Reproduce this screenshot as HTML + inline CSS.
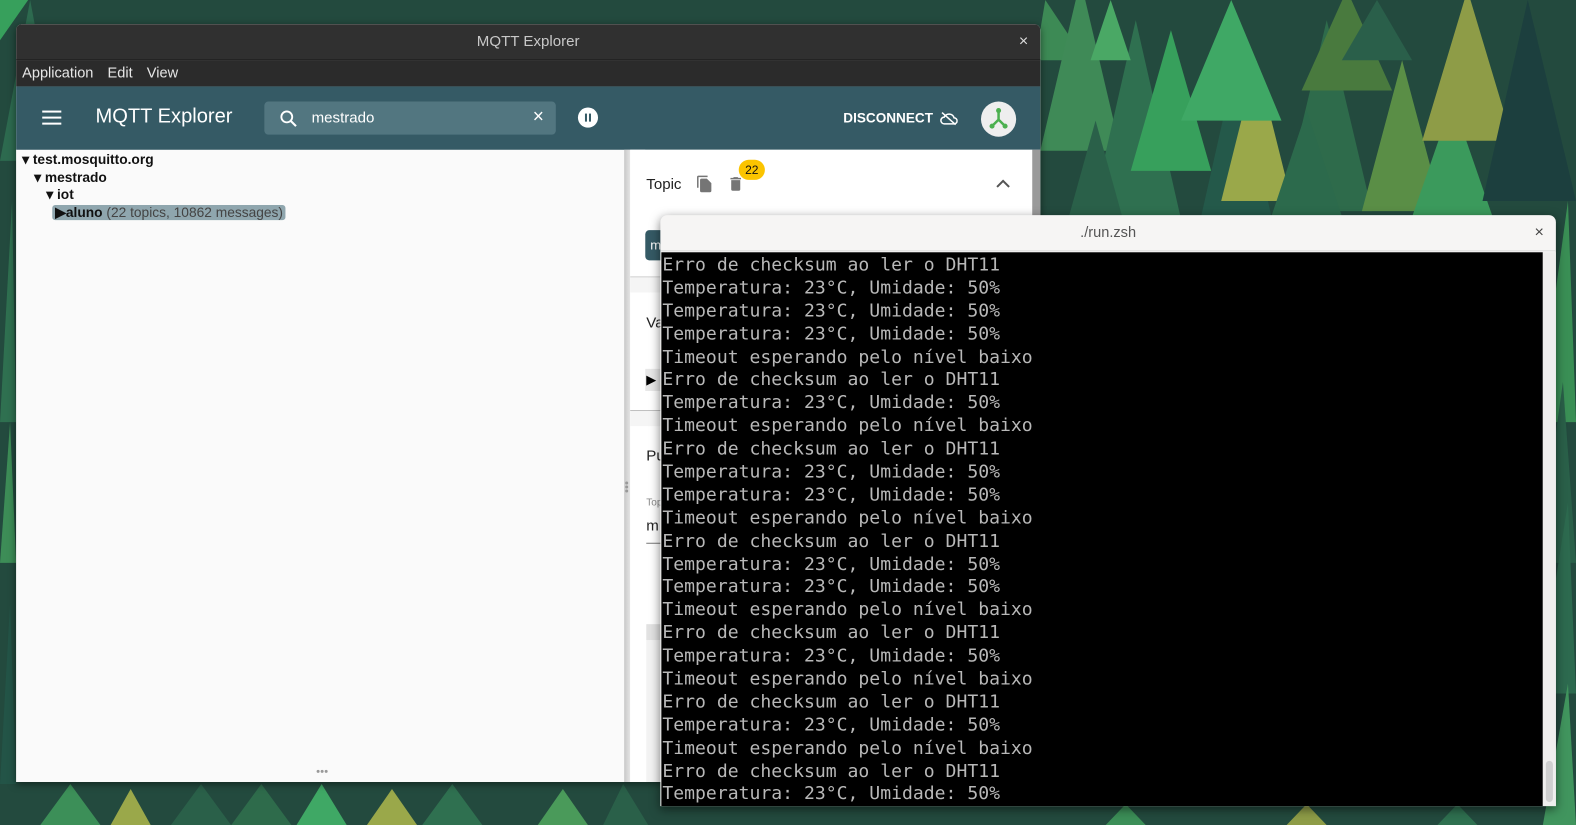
<!DOCTYPE html>
<html><head><meta charset="utf-8"><style>
*{margin:0;padding:0;box-sizing:border-box}
body{width:1576px;height:825px;overflow:hidden;position:relative;background:#234a3e;font-family:"Liberation Sans",sans-serif}
.abs{position:absolute}
#root{position:absolute;left:0;top:0;width:1568px;height:821px;transform:scale(1.0051);transform-origin:0 0}
.term div{height:22.9px;line-height:22.9px;white-space:pre}
.dot{position:absolute;width:3px;height:3px;border-radius:50%;background:#999}
</style></head><body>
<div id="root">
<svg class="abs" style="left:0;top:0" width="1568" height="821">
<rect width="1568" height="821" fill="#234a3e"/>
<polygon points="1040,0 1030,60 1080,60" fill="#3d8a55"/>
<polygon points="1075,-20 1035,150 1115,150" fill="#3f8a57"/>
<polygon points="1130,20 1080,240 1180,240" fill="#2f7050"/>
<polygon points="1165,30 1125,170 1205,170" fill="#37a05c"/>
<polygon points="1090,120 1040,300 1140,300" fill="#2a6049"/>
<polygon points="1230,60 1185,260 1275,260" fill="#24594a"/>
<polygon points="1250,60 1215,200 1285,200" fill="#9aa84a"/>
<polygon points="1225,0 1175,120 1275,120" fill="#3fa865"/>
<polygon points="1320,20 1275,210 1365,210" fill="#2e6b4b"/>
<polygon points="1340,-10 1295,90 1385,90" fill="#497a3e"/>
<polygon points="1395,60 1355,210 1435,210" fill="#5a8e46"/>
<polygon points="1445,100 1400,230 1490,230" fill="#3b9a5c"/>
<polygon points="1460,-10 1415,140 1505,140" fill="#8e9c47"/>
<polygon points="1520,0 1475,200 1568,200" fill="#1c3f3e"/>
<polygon points="1300,110 1260,230 1340,230" fill="#2c6a4c"/>
<polygon points="1370,0 1335,60 1405,60" fill="#2a5f4a"/>
<polygon points="1105,0 1085,60 1125,60" fill="#4aa865"/>
<polygon points="1560,200 1530,420 1568,420" fill="#3a8f55"/>
<polygon points="1555,380 1530,560 1568,560" fill="#2a6049"/>
<polygon points="1560,500 1530,690 1568,690" fill="#2d6a4f"/>
<polygon points="1560,680 1535,821 1568,821" fill="#41955e"/>
<polygon points="30,0 0,160 60,160" fill="#2d6a4f"/>
<polygon points="0,0 28,0 0,40" fill="#37a05c"/>
<polygon points="12,200 0,420 16,420" fill="#2f7050"/>
<polygon points="10,420 0,560 16,560" fill="#3d8d57"/>
<polygon points="10,600 0,780 16,780" fill="#235447"/>
<polygon points="70,780 40,821 100,821" fill="#3c8f58"/>
<polygon points="130,785 110,821 150,821" fill="#9aa84a"/>
<polygon points="200,780 170,821 230,821" fill="#2a6049"/>
<polygon points="260,780 230,821 290,821" fill="#2e6b4b"/>
<polygon points="320,780 295,821 345,821" fill="#3fa865"/>
<polygon points="390,785 365,821 415,821" fill="#9aa84a"/>
<polygon points="450,780 420,821 480,821" fill="#2f7050"/>
<polygon points="560,785 535,821 585,821" fill="#4a9a5a"/>
<polygon points="620,780 600,821 645,821" fill="#2a6049"/>
<polygon points="1120,800 1100,821 1140,821" fill="#3c8f58"/>
<polygon points="1300,800 1280,821 1320,821" fill="#8e9c47"/>
<polygon points="1450,800 1430,821 1470,821" fill="#2f7050"/>
</svg>

<!-- MQTT window -->
<div class="abs" style="left:16px;top:24px;width:1019px;height:754px;background:#fafafa;box-shadow:0 2px 8px rgba(0,0,0,.5);border-radius:6px 6px 0 0;overflow:hidden">
  <div class="abs" style="left:0;top:0;width:1019px;height:36px;background:#303030;border-bottom:1px solid #1e1e1e;color:#c8c8c8;font-size:15px;text-align:center;line-height:36px">MQTT Explorer<span class="abs" style="right:12px;top:0;font-size:16px;color:#ddd">×</span></div>
  <div class="abs" style="left:0;top:36px;width:1019px;height:26px;background:#2b2b2b;color:#e6e6e6;font-size:14.5px;line-height:26px;padding-left:6px;word-spacing:3px">Application&nbsp; Edit&nbsp; View</div>
  <div class="abs" style="left:0;top:62px;width:1019px;height:63px;background:#355a65">
    <div class="abs" style="left:26px;top:24px;width:19px;height:2px;background:#fff;box-shadow:0 6px 0 #fff,0 12px 0 #fff"></div>
    <div class="abs" style="left:79px;top:19px;color:#fff;font-size:20px">MQTT Explorer</div>
    <div class="abs" style="left:247px;top:15px;width:290px;height:33px;background:#527680;border-radius:4px">
      <svg class="abs" style="left:14px;top:7px" width="20" height="20" viewBox="0 0 24 24"><circle cx="10" cy="10" r="6.5" stroke="#fff" stroke-width="2.2" fill="none"/><line x1="15" y1="15" x2="21" y2="21" stroke="#fff" stroke-width="2.5"/></svg>
      <div class="abs" style="left:47px;top:8px;color:#fff;font-size:15px">mestrado</div>
      <div class="abs" style="left:267px;top:5px;color:#fff;font-size:19px">×</div>
    </div>
    <div class="abs" style="left:559px;top:21px;width:20px;height:20px;border-radius:50%;background:#fff"><div class="abs" style="left:7px;top:6px;width:2px;height:8px;background:#355a65;box-shadow:4px 0 0 #355a65"></div></div>
    <div class="abs" style="left:823px;top:24px;color:#fff;font-size:13.5px;font-weight:bold">DISCONNECT</div>
    <svg class="abs" style="left:919px;top:25px" width="18" height="14" viewBox="0 0 24 18"><path d="M6 16h13a4 4 0 0 0 0-8 7 7 0 0 0-13-1 4.5 4.5 0 0 0 0 9z" stroke="#fff" stroke-width="2" fill="none"/><line x1="3" y1="1" x2="21" y2="17" stroke="#fff" stroke-width="2"/></svg>
    <div class="abs" style="left:960px;top:15px;width:35px;height:35px;border-radius:50%;background:#eee"><svg width="35" height="35"><path d="M17.5 9v9 M17.5 18l-6 6 M17.5 18l6 6" stroke="#4cb050" stroke-width="2.5" fill="none"/><circle cx="17.5" cy="9" r="2.5" fill="#4cb050"/><circle cx="11" cy="24.5" r="2.5" fill="#4cb050"/><circle cx="24" cy="24.5" r="2.5" fill="#4cb050"/></svg></div>
  </div>
  <div class="abs" style="left:6px;top:126px;font-size:13.7px;font-weight:bold;color:#111;line-height:17.7px">
    <div>▾ test.mosquitto.org</div>
    <div style="padding-left:12px">▾ mestrado</div>
    <div style="padding-left:24px">▾ iot</div>
    <div style="padding-left:30px"><span style="background:#8fa6ae;border-radius:3px;padding:0 2px 0 3px">▶aluno <span style="font-weight:normal;color:#444">(22 topics, 10862 messages)</span></span></div>
  </div>
  <div class="dot" style="left:299px;top:742px"></div><div class="dot" style="left:303px;top:742px"></div><div class="dot" style="left:307px;top:742px"></div>
  <div class="abs" style="left:605px;top:125px;width:6px;height:632px;background:linear-gradient(90deg,#c8c8c8,#e4e4e4)"></div>
  <div class="dot" style="left:606px;top:455px"></div><div class="dot" style="left:606px;top:459px"></div><div class="dot" style="left:606px;top:463px"></div>
  <div class="abs" style="left:611px;top:125px;width:15px;height:632px;background:#f5f5f5"></div>
  <div class="abs" style="left:611px;top:125px;width:400px;height:632px;background:#fff">
    <div class="abs" style="left:16px;top:26px;font-size:15px;color:#222">Topic</div>
    <svg class="abs" style="left:65px;top:25px" width="18" height="18" viewBox="0 0 24 24"><path d="M16 1H4a2 2 0 0 0-2 2v14h2V3h12z M15 5l6 6v10a2 2 0 0 1-2 2H8a2 2 0 0 1-2-2V7a2 2 0 0 1 2-2z" fill="#757575"/></svg>
    <svg class="abs" style="left:96px;top:24px" width="18" height="20" viewBox="0 0 24 24"><path d="M6 19a2 2 0 0 0 2 2h8a2 2 0 0 0 2-2V7H6zM19 4h-3.5l-1-1h-5l-1 1H5v2h14z" fill="#757575"/></svg>
    <div class="abs" style="left:108px;top:10px;width:26px;height:20px;border-radius:10px;background:#fbc400;font-size:12px;text-align:center;line-height:20px;color:#111">22</div>
    <svg class="abs" style="left:364px;top:29px" width="14" height="10"><path d="M1 8l6-6 6 6" stroke="#555" stroke-width="2" fill="none"/></svg>
    <div class="abs" style="left:15px;top:80px;width:20px;height:30px;background:#355a65;border-radius:4px;color:#fff;font-size:13px;line-height:30px;padding-left:5px">m</div>
    <div class="abs" style="left:0;top:126px;width:400px;height:1px;background:#ccc"></div>
    <div class="abs" style="left:0;top:127px;width:400px;height:15px;background:#f5f5f5"></div>
    <div class="abs" style="left:16px;top:164px;font-size:15px;color:#222">Va</div>
    <div class="abs" style="left:15px;top:218px;width:20px;height:22px;background:#e8e8e8;font-size:13px;line-height:22px;padding-left:1px">▶</div>
    <div class="abs" style="left:0;top:259px;width:400px;height:1px;background:#bbb"></div>
    <div class="abs" style="left:0;top:260px;width:400px;height:15px;background:#f5f5f5"></div>
    <div class="abs" style="left:16px;top:296px;font-size:15px;color:#222">Pu</div>
    <div class="abs" style="left:16px;top:346px;font-size:10px;color:#888">Top</div>
    <div class="abs" style="left:16px;top:366px;font-size:15px;color:#222">m</div>
    <div class="abs" style="left:16px;top:391px;width:30px;height:1px;background:#777"></div>
    <div class="abs" style="left:16px;top:472px;width:30px;height:16px;background:#e2e2e2"></div>
    <div class="abs" style="left:16px;top:488px;width:30px;height:150px;background:#f3f3f3"></div>
  </div>
  <div class="abs" style="left:1011px;top:125px;width:8px;height:632px;background:#9a9a9a"></div>
</div>

<div class="abs" style="left:657px;top:214px;width:891px;height:588px;background:#f6f5f4;border-radius:7px 7px 0 0;box-shadow:0 3px 10px rgba(0,0,0,.5);overflow:hidden">
  <div class="abs" style="left:0;top:0;width:891px;height:36px;border-bottom:1px solid #dcdcdc;text-align:center;line-height:36px;font-size:14.5px;color:#555">./run.zsh<span class="abs" style="right:12px;top:0;font-size:16px;color:#444">×</span></div>
  <div class="abs term" style="left:1px;top:37px;width:877px;height:551px;background:#000;color:#b8b8b8;font-family:'DejaVu Sans Mono','Liberation Mono',monospace;font-size:18px;padding:2px 0 0 1px;overflow:hidden"><div>Erro de checksum ao ler o DHT11</div><div>Temperatura: 23°C, Umidade: 50%</div><div>Temperatura: 23°C, Umidade: 50%</div><div>Temperatura: 23°C, Umidade: 50%</div><div>Timeout esperando pelo nível baixo</div><div>Erro de checksum ao ler o DHT11</div><div>Temperatura: 23°C, Umidade: 50%</div><div>Timeout esperando pelo nível baixo</div><div>Erro de checksum ao ler o DHT11</div><div>Temperatura: 23°C, Umidade: 50%</div><div>Temperatura: 23°C, Umidade: 50%</div><div>Timeout esperando pelo nível baixo</div><div>Erro de checksum ao ler o DHT11</div><div>Temperatura: 23°C, Umidade: 50%</div><div>Temperatura: 23°C, Umidade: 50%</div><div>Timeout esperando pelo nível baixo</div><div>Erro de checksum ao ler o DHT11</div><div>Temperatura: 23°C, Umidade: 50%</div><div>Timeout esperando pelo nível baixo</div><div>Erro de checksum ao ler o DHT11</div><div>Temperatura: 23°C, Umidade: 50%</div><div>Timeout esperando pelo nível baixo</div><div>Erro de checksum ao ler o DHT11</div><div>Temperatura: 23°C, Umidade: 50%</div></div>
  <div class="abs" style="left:878px;top:37px;width:13px;height:551px;background:#efeeed"></div>
  <div class="abs" style="left:881px;top:543px;width:7px;height:41px;border-radius:4px;background:#cfcfcf"></div>
</div>
</div>
</body></html>
